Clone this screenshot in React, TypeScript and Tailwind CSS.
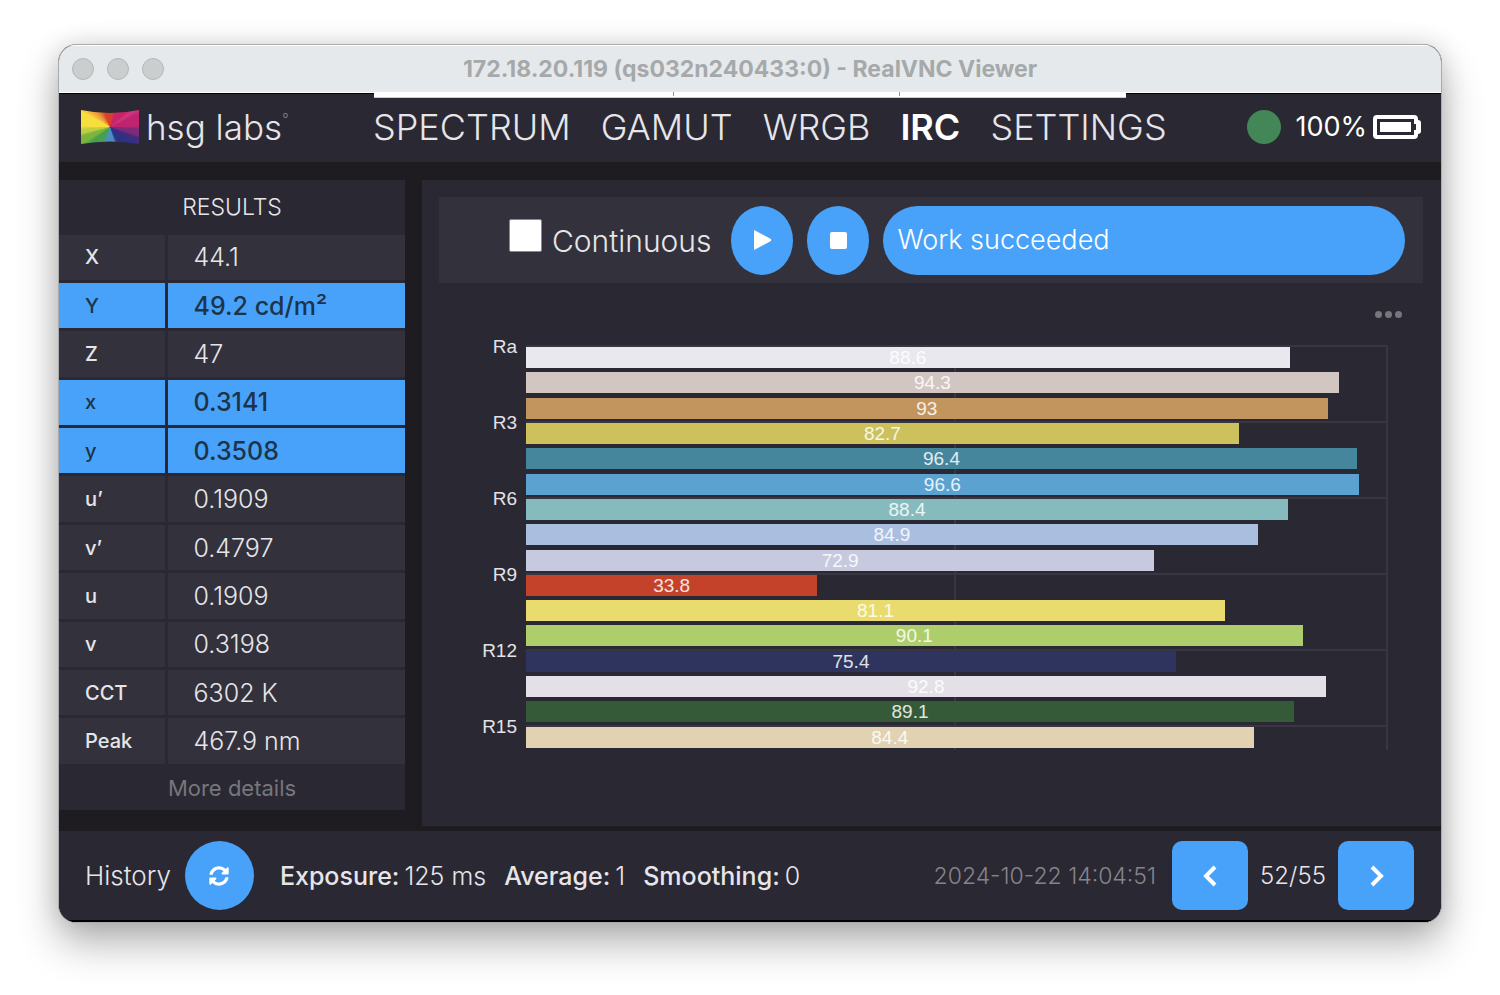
import React from "react";
import clsx from "clsx";
import { FaSyncAlt } from "react-icons/fa";

const tabs = ["SPECTRUM", "GAMUT", "WRGB", "IRC", "SETTINGS"];

const results = [
  { name: "X", value: "44.1" },
  { name: "Y", value: "49.2 cd/m²", active: true },
  { name: "Z", value: "47" },
  { name: "x", value: "0.3141", active: true },
  { name: "y", value: "0.3508", active: true },
  { name: "u’", value: "0.1909" },
  { name: "v’", value: "0.4797" },
  { name: "u", value: "0.1909" },
  { name: "v", value: "0.3198" },
  { name: "CCT", value: "6302 K" },
  { name: "Peak", value: "467.9 nm" },
];

const bars = [
  { label: "Ra", value: 88.6, color: "#e9e8ee" },
  { label: "R1", value: 94.3, color: "#d2c6c2" },
  { label: "R2", value: 93, color: "#c2955e" },
  { label: "R3", value: 82.7, color: "#ccc15c" },
  { label: "R4", value: 96.4, color: "#45869c" },
  { label: "R5", value: 96.6, color: "#5ba2d0" },
  { label: "R6", value: 88.4, color: "#86bbbd" },
  { label: "R7", value: 84.9, color: "#aabee0" },
  { label: "R8", value: 72.9, color: "#c7c9df" },
  { label: "R9", value: 33.8, color: "#c4422a" },
  { label: "R10", value: 81.1, color: "#e9db6d" },
  { label: "R11", value: 90.1, color: "#adce6b" },
  { label: "R12", value: 75.4, color: "#2f345f" },
  { label: "R13", value: 92.8, color: "#e3e1e7" },
  { label: "R14", value: 89.1, color: "#355a37" },
  { label: "R15", value: 84.4, color: "#e1d2b2" },
];

function Logo() {
  return (
    <span
      aria-hidden="true"
      className="h-[34px] w-[58px] bg-[conic-gradient(#d8402b_8deg,#c9236a_22deg,#c9236a_48deg,#cc3a80_56deg,#c1246f_66deg,#c1246f_88deg,#7d2a78_94deg,#7d2a78_106deg,#46297b_112deg,#2d3183_128deg,#2d3183_154deg,#4a8fc0_166deg,#4a8fc0_196deg,#47a04a_208deg,#47a04a_232deg,#7db43f_240deg,#7db43f_252deg,#c0cf3f_258deg,#c0cf3f_266deg,#f6df3d_272deg,#f6df3d_298deg,#f3b83f_306deg,#e98a35_322deg,#d8402b_340deg)] [clip-path:path('M0_0Q29_6_58_0V34Q29_29_0_34Z')]"
    />
  );
}

function Battery() {
  return (
    <svg width="48" height="24" viewBox="0 0 48 24" aria-hidden="true">
      <path
        fill="#fff"
        fillRule="evenodd"
        d="M4 0H41Q45 0 45 4V5Q48 5 48 8V16Q48 19 45 19V20Q45 24 41 24H4Q0 24 0 20V4Q0 0 4 0ZM4 4V20H41V15H43V9H41V4Z"
      />
      <path fill="#fff" d="M7 7H38V17H7Z" />
    </svg>
  );
}

function Chevron({ d }: { d: string }) {
  return (
    <svg width="20" height="24" viewBox="0 0 20 24" fill="none" aria-hidden="true">
      <path d={d} stroke="#fff" strokeWidth="4" />
    </svg>
  );
}

function Header() {
  return (
    <header className="flex h-[69px] items-center border-t border-black bg-[#2a2832] pr-5 pb-0.5 pl-[22px]">
      <a href="#home" className="flex w-[292px] shrink-0 items-center gap-[7px]">
        <Logo />
        <span className="flex text-[35px] leading-10 font-light">
          hsg labs
          <span className="text-sm leading-6 text-[#8b8990]">°</span>
        </span>
      </a>
      <nav className="flex gap-[30px] text-[36px] leading-10 font-light">
        {tabs.map((t) => (
          <a
            key={t}
            href={"#" + t.toLowerCase()}
            className={clsx(t === "IRC" && "font-semibold text-white")}
          >
            {t}
          </a>
        ))}
      </nav>
      <div className="ml-auto flex items-center">
        <span className="mr-3.5 size-[34px] rounded-full bg-[#438657]" />
        <span className="mr-1.5 text-[27px] leading-8 text-white">100%</span>
        <Battery />
      </div>
    </header>
  );
}

function Results() {
  return (
    <section className="w-[346px] shrink-0 self-start bg-[#2a2832]">
      <h2 className="text-center text-[23px] leading-[54px] font-light">RESULTS</h2>
      <table className="mt-px h-[532px] w-full border-collapse">
        <tbody>
          {results.map((r) => (
            <tr
              key={r.name}
              className={clsx(
                "border-b-[3px] border-[#2a2832]",
                r.active ? "bg-[#48a2f9] text-[#1d3448]" : "bg-[#33323c]"
              )}
            >
              <th
                scope="row"
                className="w-[107px] border-r-[3px] border-[#2a2832] pl-[26px] text-left text-xl leading-7 font-medium"
              >
                {r.name}
              </th>
              <td
                className={clsx(
                  "pl-[26px] text-[25px] leading-8",
                  r.active ? "font-medium" : "font-light"
                )}
              >
                {r.value}
              </td>
            </tr>
          ))}
        </tbody>
      </table>
      <button className="block h-[43px] w-full text-[22px] leading-[43px] text-[#77767d]">
        More details
      </button>
    </section>
  );
}

function Toolbar() {
  return (
    <div className="flex h-[86px] items-center bg-[#33323c] pr-[18px] pl-[70px]">
      <label className="flex items-center gap-2.5 text-[30px] leading-9 font-light">
        <input
          type="checkbox"
          className="mb-2.5 size-[33px] appearance-none rounded-xs border border-[#8a8a8a] bg-white"
        />
        <span className="pt-0.5">Continuous</span>
      </label>
      <button
        aria-label="Play"
        className="ml-5 flex h-[69px] w-[62px] shrink-0 items-center justify-center rounded-[50%] bg-[#48a2f9]"
      >
        <svg width="18" height="20" viewBox="0 0 18 20" aria-hidden="true">
          <path fill="#fff" d="M1 0L18 9V11L1 20Z" />
        </svg>
      </button>
      <button
        aria-label="Stop"
        className="ml-3.5 flex h-[69px] w-[62px] shrink-0 items-center justify-center rounded-[50%] bg-[#48a2f9]"
      >
        <span className="size-[17px] rounded-xs bg-white" />
      </button>
      <output className="ml-3.5 h-[69px] flex-1 rounded-full bg-[#48a2f9] pl-3.5 text-[27px] leading-[67px] font-light text-white">
        Work succeeded
      </output>
    </div>
  );
}

function Chart() {
  return (
    <div className="pr-[35px] pl-[87px]">
      <div className="relative font-['Liberation_Sans',Arial,sans-serif] text-[19px]">
        {/* 50 and 100 marks */}
        <div className="absolute inset-0 border-r-2 border-[#383741]">
          <div className="h-full w-1/2 border-r-2 border-[#383741]" />
        </div>
        <div className="relative grid h-[405px] grid-rows-16">
          {/* Every third row carries a split line and its name */}
          {bars.map((b, i) => (
            <div
              key={b.label}
              className={clsx("relative", i % 3 === 0 && "border-t-2 border-[#383741]")}
            >
              {i % 3 === 0 && (
                <span className="absolute right-full mr-[9px] leading-0 text-[#e3e2e6]">
                  {b.label}
                </span>
              )}
              <div
                className={clsx(
                  "h-[21px] text-center leading-[21px] text-white/85",
                  i % 3 !== 0 && "mt-0.5"
                )}
                style={{ width: b.value + "%", backgroundColor: b.color }}
              >
                {b.value}
              </div>
            </div>
          ))}
        </div>
      </div>
    </div>
  );
}

function Footer() {
  return (
    <footer className="flex h-[91px] items-center border-b-2 border-black bg-[#2a2832] pr-[27px] pl-[26px] text-[26px] leading-8 font-light">
      <span>History</span>
      <button
        aria-label="Refresh history"
        className="ml-3.5 flex size-[69px] items-center justify-center rounded-full bg-[#48a2f9] text-white"
      >
        <FaSyncAlt size={20} />
      </button>
      <dl className="ml-[26px] flex gap-[18px] text-[25px]">
        <div className="flex gap-[5px]">
          <dt className="font-medium">Exposure:</dt>
          <dd>125 ms</dd>
        </div>
        <div className="flex gap-[5px]">
          <dt className="font-medium">Average:</dt>
          <dd>1</dd>
        </div>
        <div className="flex gap-[5px]">
          <dt className="font-medium">Smoothing:</dt>
          <dd>0</dd>
        </div>
      </dl>
      <time className="ml-auto text-[23px] text-[#85848b]">2024-10-22 14:04:51</time>
      <button
        aria-label="Previous"
        className="ml-4 flex h-[69px] w-[76px] items-center justify-center rounded-[10px] bg-[#48a2f9]"
      >
        <Chevron d="M15 3L6 12L15 21" />
      </button>
      <span className="w-[90px] text-center text-2xl">52/55</span>
      <button
        aria-label="Next"
        className="flex h-[69px] w-[76px] items-center justify-center rounded-[10px] bg-[#48a2f9]"
      >
        <Chevron d="M6 3L15 12L6 21" />
      </button>
    </footer>
  );
}

export default function App() {
  return (
    <div className="min-h-screen bg-white px-[58px] pt-11 pb-[72px] font-[Inter,sans-serif] text-[#e6e5e9]">
      <div className="overflow-hidden rounded-[18px] border border-[#a9abad] bg-[#1e1c20] shadow-[0_20px_40px_rgba(0,0,0,0.3),0_0_24px_rgba(0,0,0,0.12)]">
        {/* Title bar */}
        <div className="relative flex h-12 items-center justify-center border-t border-b border-white bg-[#e5e9ec]">
          <div className="absolute left-[13px] flex gap-[13px]">
            <span className="size-[22px] rounded-full border border-[#b3b7b8] bg-[#cbcecf]" />
            <span className="size-[22px] rounded-full border border-[#b3b7b8] bg-[#cbcecf]" />
            <span className="size-[22px] rounded-full border border-[#b3b7b8] bg-[#cbcecf]" />
          </div>
          <h1 className="text-[23px] leading-8 font-bold text-[#a5a9aa]">
            172.18.20.119 (qs032n240433:0) - RealVNC Viewer
          </h1>
          {/* Collapsed viewer toolbar peeking out over the session */}
          <div className="absolute top-full left-1/2 flex h-1.5 w-[752px] -translate-x-1/2 border-b border-[#c9ccce] bg-white">
            <span className="h-1 w-[300px] border-r border-[#909395]" />
            <span className="h-1 w-[226px] border-r border-[#909395]" />
          </div>
        </div>

        <Header />

        <main className="flex gap-[17px] pt-[18px] pb-[5px]">
          <Results />
          <section className="min-w-0 flex-1 bg-[#2a2832] pt-[17px] pr-[18px] pb-[76px] pl-[17px]">
            <Toolbar />
            <div className="flex h-[62px] justify-end pt-[23px] pr-[21px]">
              <button aria-label="Chart menu" className="flex h-4 items-center gap-[3px]">
                <span className="size-[7px] rounded-full bg-[#77767d]" />
                <span className="size-[7px] rounded-full bg-[#77767d]" />
                <span className="size-[7px] rounded-full bg-[#77767d]" />
              </button>
            </div>
            <Chart />
          </section>
        </main>

        <Footer />
      </div>
    </div>
  );
}
